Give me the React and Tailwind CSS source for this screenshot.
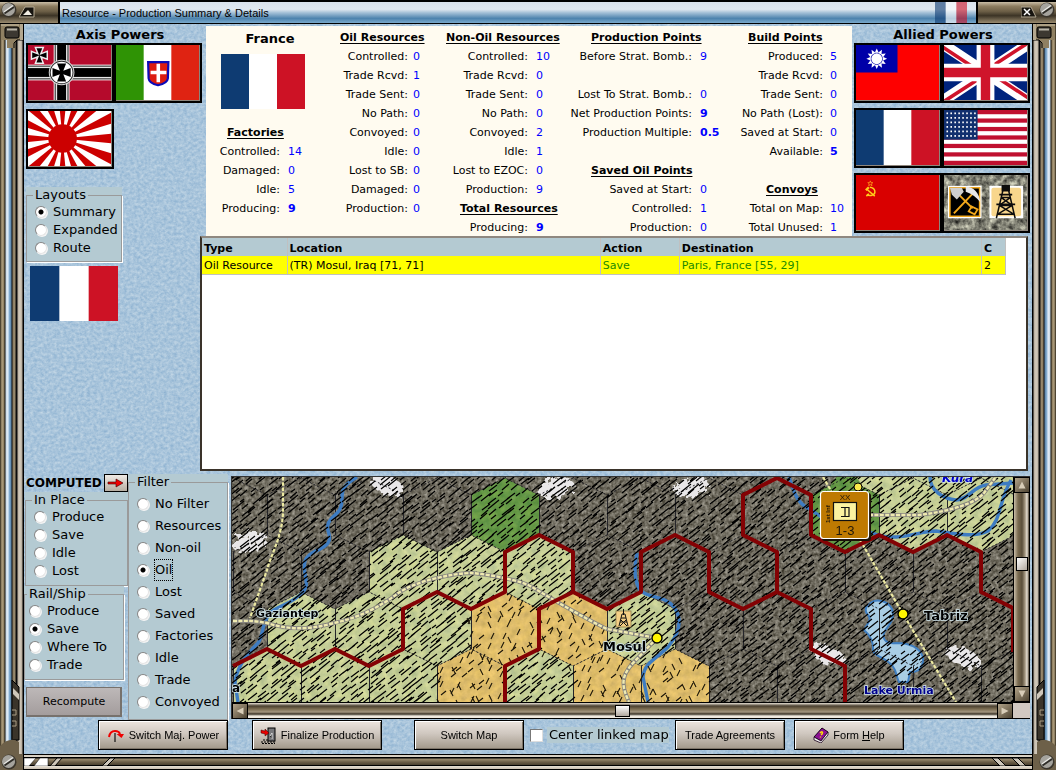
import React from "react";

/* ---------- deterministic random numbers for the terrain strokes ---------- */
function makeRandom(seed) {
  let s = seed;
  return () => {
    s = (s * 1664525 + 1013904223) % 4294967296;
    return s / 4294967296;
  };
}

/* ---------- hex map data ---------- */
const MAP_W = 781;
const MAP_H = 225;
const M = "#706c60";
const C = "#c6cf96";
const F = "#659846";
const D = "#dfbd6a";
const ROWS = [
  { r: -1, kinds: [M, M, M, M, M, M, M, M, M, C, C, C] },
  { r: 0, kinds: [M, M, M, M, F, M, M, M, M, F, C, C] },
  { r: 1, kinds: [M, M, C, C, C, M, M, M, M, M, M, M] },
  { r: 2, kinds: [M, C, C, C, D, D, C, M, M, M, M, M] },
  { r: 3, kinds: [C, C, C, D, C, D, D, M, M, M, M, M] },
];
const HEXES = ROWS.flatMap(({ r, kinds }) =>
  kinds.map((fill, c) => ({
    id: `${r}-${c}`,
    fill,
    cx: (r % 2 === 0 ? 1 : 35) + 68 * c,
    cy: 38 + 57 * r,
  }))
);
const hexPoints = (cx, cy) =>
  `${cx},${cy - 37} ${cx + 34},${cy - 20} ${cx + 34},${cy + 20} ${cx},${cy + 37} ${cx - 34},${cy + 20} ${cx - 34},${cy - 20}`;

function kindAt(x, y) {
  let best = HEXES[0];
  let bestD = Infinity;
  for (const h of HEXES) {
    const d = (h.cx - x) ** 2 + (h.cy - y) ** 2;
    if (d < bestD) {
      bestD = d;
      best = h;
    }
  }
  return best.fill;
}

const STROKES = (() => {
  const rnd = makeRandom(7);
  let slanted = "";
  let crossed = "";
  for (let y = 0; y < MAP_H + 8; y += 6) {
    for (let x = -6; x < MAP_W; x += 10) {
      const px = Math.round(x + rnd() * 7);
      const py = Math.round(y + rnd() * 4);
      const len = 4 + Math.round(rnd() * 7);
      const pick = rnd();
      if (kindAt(px + len / 2, py - len / 2) === D) {
        if (pick < 0.25) crossed += `M${px} ${py}l3 -6`;
        else if (pick < 0.42) crossed += `M${px} ${py}l5 -4`;
        else if (pick < 0.6) crossed += `M${px} ${py}l3 6`;
      } else {
        slanted += `M${px} ${py}l${len} ${-Math.round(len * 0.8)}`;
      }
    }
  }
  return { slanted, crossed };
})();

const BORDERS = [
  "M1 189L35 172L69 189L103 172L137 189L171 172V132L205 115L239 132L273 115V75L307 58L341 75V115L375 132L409 115V75L443 58L477 75V115L511 132L545 115L579 132V172L613 189V230",
  "M545 115V75L511 58V18L545 1L579 18V58L613 75L647 58L681 75L715 58L749 75V115L783 132",
  "M273 230V189L307 172V132L341 115",
  "M781 132V175",
];
const RIVERS = [
  "M125 0C112 8 110 12 110 20C110 36 104 36 99 42C90 52 102 58 96 66C90 74 76 74 73 84C70 96 78 106 72 114C60 128 46 128 38 136C28 150 32 158 26 166C12 180 4 192 3 206L6 225",
  "M405 76C402 90 402 106 409 114C418 122 432 118 442 130C452 144 446 158 436 170C424 182 412 186 411 200L416 225",
  "M557 0C562 14 564 24 574 30C590 38 586 46 640 56C668 66 684 54 704 54C730 58 744 60 756 54C770 42 766 26 779 3",
  "M698 0C698 14 712 22 724 23C738 22 740 10 754 8L781 6",
];
const RAILS = [
  "M1 144C16 144 18 143 35 146C60 154 80 152 102 146C130 140 150 128 165 117C182 104 222 96 240 96C262 98 290 104 300 110C320 122 350 140 375 152L425 161",
  "M425 161L401 186C388 200 390 210 397 225",
  "M637 38H687C720 34 744 26 752 16L763 1",
];
const ROADS = ["M51 0V36C50 60 38 80 35 93L18 141", "M591 0L631 68L671 137L724 225"];
const SNOW = [
  { x: 18, y: 65, turn: -15 },
  { x: 155, y: 8, turn: 22 },
  { x: 323, y: 10, turn: -15 },
  { x: 460, y: 10, turn: -15 },
  { x: 596, y: 178, turn: 22 },
  { x: 731, y: 180, turn: 22 },
];

function MapLabel({ x, y, size = 12, fill = "#000", italic, children }) {
  return (
    <text
      x={x}
      y={y}
      fontSize={size}
      fontWeight="bold"
      fontStyle={italic ? "italic" : "normal"}
      fontFamily="DejaVu Sans, sans-serif"
      fill={fill}
      stroke="#d4e9f0"
      strokeWidth="1.500"
      paintOrder="stroke"
    >
      {children}
    </text>
  );
}

function HexMap() {
  return (
    <svg
      viewBox={`0 0 ${MAP_W} ${MAP_H}`}
      preserveAspectRatio="xMinYMin slice"
      className="block h-[225px] w-full min-w-0 flex-1 bg-[#706c60]"
      role="img"
      aria-label="Map around Mosul"
    >
      <defs>
        <filter id="grain" x="0" y="0" width="100%" height="100%" colorInterpolationFilters="sRGB">
          <feTurbulence type="fractalNoise" baseFrequency="0.3" numOctaves="2" seed="4" />
          <feColorMatrix values="1 0 0 0 0 1 0 0 0 0 1 0 0 0 0 0 0 0 0 1" result="n" />
          <feComposite in="SourceGraphic" in2="n" operator="arithmetic" k1="0" k2="1" k3="0.6" k4="-0.3" />
          <feComposite in2="SourceGraphic" operator="in" />
        </filter>
        <filter id="softgrain" x="0" y="0" width="100%" height="100%" colorInterpolationFilters="sRGB">
          <feTurbulence type="fractalNoise" baseFrequency="0.14" numOctaves="3" seed="9" />
          <feColorMatrix values="1 0 0 0 0 .8 0 0 0 .1 0.4 0 .3 0 .15 0 0 0 0 1" result="n" />
          <feComposite in="SourceGraphic" in2="n" operator="arithmetic" k1="0" k2="1" k3="0.22" k4="-0.11" />
          <feComposite in2="SourceGraphic" operator="in" />
        </filter>
        <filter id="ragged" x="-40%" y="-60%" width="180%" height="220%">
          <feTurbulence type="fractalNoise" baseFrequency="0.2" numOctaves="2" seed="2" />
          <feDisplacementMap in="SourceGraphic" scale="16" />
        </filter>
      </defs>
      <g filter="url(#grain)">
        {HEXES.filter((h) => h.fill === M).map((h) => (
          <polygon key={h.id} points={hexPoints(h.cx, h.cy)} fill={h.fill} />
        ))}
      </g>
      <g filter="url(#softgrain)">
        {HEXES.filter((h) => h.fill !== M).map((h) => (
          <polygon key={h.id} points={hexPoints(h.cx, h.cy)} fill={h.fill} />
        ))}
        <circle cx="614" cy="13" r="16" fill={F} />
      </g>
      <g filter="url(#ragged)">
        {SNOW.map(({ x, y, turn }) => (
          <ellipse key={x} cx={x} cy={y} rx="18" ry="9" fill="#e9e7e8" transform={`rotate(${turn} ${x} ${y})`} />
        ))}
      </g>
      <path d="M636 128C644 120 656 124 660 132C664 144 654 150 652 156C650 164 656 167 664 166C680 166 688 172 691 180C692 190 686 196 678 195L676 205H667C664 200 666 196 660 188C652 180 644 180 641 174C642 164 638 158 632 153C636 146 640 142 636 138C632 134 634 130 636 128Z" fill="#a9cde4" stroke="#3f7ec0" strokeWidth="2" />
      <g fill="none" stroke="#25252a" strokeWidth="1">
        {HEXES.map((h) => (
          <g key={h.id}>
            <path d={`M${h.cx - 34}.500 ${h.cy - 20}v40`} />
            <path d={`M${h.cx - 34} ${h.cy - 20}l34 -17l34 17`} strokeDasharray="2 2" />
          </g>
        ))}
      </g>
      <g fill="none" stroke="#3e7cc2" strokeWidth="3.4">
        {RIVERS.map((d) => <path key={d} d={d} />)}
      </g>
      <path d={STROKES.slanted} stroke="#000" strokeWidth="1.2" fill="none" />
      <path d={STROKES.crossed} stroke="#1a1408" strokeWidth="1.1" fill="none" />
      <g fill="none">
        {RAILS.map((d) => (
          <g key={d}>
            <path d={d} stroke="#85837e" strokeWidth="4" />
            <path d={d} stroke="#efeab0" strokeWidth="2.4" strokeDasharray="4 1.4" />
          </g>
        ))}
        {ROADS.map((d) => (
          <path key={d} d={d} stroke="#ece9a2" strokeWidth="2.2" strokeDasharray="3.6 1.6" />
        ))}
        {BORDERS.map((d) => (
          <path key={d} d={d} stroke="#840204" strokeWidth="4" strokeLinejoin="round" />
        ))}
      </g>
      {/* oil well */}
      <g>
        <rect x="384" y="134" width="15" height="16" fill="#f5cf85" stroke="#8c7a4a" strokeWidth="0.8" />
        <path d="M387 149L390 137H393L396 149M388 145H395M389 141H394M388 149L394 143M395 149L389 143M391.500 132V138" stroke="#111" fill="none" />
      </g>
      <circle cx="425" cy="161" r="5" fill="#fff500" stroke="#000" strokeWidth="1.4" />
      <circle cx="671" cy="137" r="5" fill="#fff500" stroke="#000" strokeWidth="1.4" />
      <circle cx="626" cy="10" r="4" fill="#fbe94a" stroke="#000" />
      {/* unit counter */}
      <g>
        <rect x="590" y="16" width="49" height="48" rx="3" fill="#1a1208" />
        <rect x="588.500" y="14.500" width="48" height="47" rx="3" fill="#be7a02" stroke="#fff" strokeWidth="1.2" />
        <text x="613" y="23" textAnchor="middle" fontSize="8" fontFamily="Liberation Sans, sans-serif" fill="#20180a">XX</text>
        <rect x="601.500" y="25.500" width="23" height="18" fill="#fbf3a0" stroke="#111" strokeWidth="1.2" />
        <path d="M608.500 39V31H617.500V39M608.500 35H617.500M608.500 39V31" fill="none" stroke="#111" strokeWidth="1.2" transform="rotate(90 613 35)" />
        <text x="613" y="58" textAnchor="middle" fontSize="13" fontFamily="Liberation Sans, sans-serif" fill="#20180a">1-3</text>
        <text transform="translate(598 46) rotate(-90)" fontSize="6" fontWeight="bold" fontFamily="Liberation Sans, sans-serif" fill="#20180a">1st Inf</text>
      </g>
      <MapLabel x={24} y={140} size={11}>Gaziantep</MapLabel>
      <MapLabel x={0} y={215} size={12}>a</MapLabel>
      <MapLabel x={371} y={174} size={13}>Mosul</MapLabel>
      <MapLabel x={692} y={143} size={13}>Tabriz</MapLabel>
      <MapLabel x={632} y={217} size={11} fill="#00008c">Lake Urmia</MapLabel>
      <MapLabel x={710} y={5} size={12} fill="#0000c8" italic>Kura</MapLabel>
    </svg>
  );
}

/* ---------- flags ---------- */
function FlagSvg({ children, className = "h-full w-full" }) {
  return (
    <svg viewBox="0 0 84 56" preserveAspectRatio="none" className={`block ${className}`} aria-hidden="true">
      {children}
    </svg>
  );
}
const FRENCH = (
  <>
    <rect width="84" height="56" fill="#fff" />
    <rect width="28" height="56" fill="#0e3b72" />
    <rect x="56" width="28" height="56" fill="#cd1225" />
  </>
);
const PATTEE = "M-4 -8H4L1.500 -1.500L8 -4V4L1.500 1.500L4 8H-4L-1.500 1.500L-8 4V-4L-1.500 -1.500Z";
const FLAGS = {
  Germany: (
    <>
      <rect width="84" height="56" fill="#b50a2c" />
      {[["#fff", 16], ["#111", 14], ["#e8e8e8", 12], ["#000", 9]].map(([f, w]) => (
        <g key={w} fill={f}>
          <rect x={34 - w / 2} width={w} height="56" />
          <rect y={28 - w / 2} width="84" height={w} />
        </g>
      ))}
      <circle cx="34" cy="28" r="13" fill="#ddd" />
      <circle cx="34" cy="28" r="12" fill="#222" />
      <circle cx="34" cy="28" r="11" fill="#fff" />
      <path d={PATTEE} transform="translate(34 28) scale(1.15)" fill="#000" />
      <path d={PATTEE} transform="translate(11.500 10.500)" fill="#000" stroke="#eee" strokeWidth="1.500" />
    </>
  ),
  Italy: (
    <>
      <rect width="84" height="56" fill="#fff" />
      <rect width="28" height="56" fill="#2f9305" />
      <rect x="56" width="28" height="56" fill="#df2312" />
      <path d="M32.500 17.500H53L52.500 34Q52 39 42.500 41Q33.500 39 33 34Z" fill="#dc1c10" stroke="#0b0bb8" strokeWidth="2.200" />
      <path d="M42.800 19V38M35 28H51" stroke="#fff" strokeWidth="3.600" />
    </>
  ),
  Japan: (
    <>
      <rect width="84" height="56" fill="#fff" />
      <g fill="#cc0000">
        {Array.from({ length: 16 }, (_, i) => {
          const a = ((i * 22.5 - 5.6) * Math.PI) / 180;
          const b = ((i * 22.5 + 5.6) * Math.PI) / 180;
          return (
            <path key={i} d={`M35 28L${(35 + 90 * Math.cos(a)).toFixed(1)} ${(28 + 90 * Math.sin(a)).toFixed(1)}L${(35 + 90 * Math.cos(b)).toFixed(1)} ${(28 + 90 * Math.sin(b)).toFixed(1)}Z`} />
          );
        })}
        <circle cx="35" cy="28" r="14.500" />
      </g>
    </>
  ),
  China: (
    <>
      <rect width="84" height="56" fill="#fe0000" />
      <rect width="42" height="28" fill="#0000a8" />
      <g fill="#fff">
        {Array.from({ length: 12 }, (_, i) => (
          <path key={i} d="M-2 -6L0 -10.500L2 -6Z" transform={`translate(21 14) rotate(${i * 30})`} />
        ))}
        <circle cx="21" cy="14" r="5.500" />
      </g>
    </>
  ),
  "United Kingdom": (
    <>
      <rect width="84" height="56" fill="#00247d" />
      <path d="M0 0L84 56M84 0L0 56" stroke="#fff" strokeWidth="11" />
      <path d="M-2 1.500L40 29.500M86 54.500L44 26.500M84 -1.500L42 26M0 57.500L42 30" stroke="#cf142b" strokeWidth="3.600" />
      <path d="M42 0V56M0 28H84" stroke="#fff" strokeWidth="18" />
      <path d="M42 0V56M0 28H84" stroke="#cf142b" strokeWidth="9.500" />
    </>
  ),
  France: FRENCH,
  "United States": (
    <>
      <rect width="84" height="56" fill="#fff" />
      {Array.from({ length: 7 }, (_, i) => (
        <rect key={i} y={(i * 56 * 2) / 13} width="84" height={56 / 13} fill="#c01030" />
      ))}
      <rect width="34" height="30.200" fill="#112f6e" />
      <g fill="#fff">
        {Array.from({ length: 48 }, (_, i) => (
          <rect key={i} x={2.5 + (i % 8) * 4} y={2.5 + Math.floor(i / 8) * 4.6} width="1.600" height="1.800" />
        ))}
      </g>
    </>
  ),
  "Soviet Union": (
    <>
      <rect width="84" height="56" fill="#d90000" />
      <g fill="none" stroke="#ffce1a" strokeWidth="1.500">
        <path d="M14 12.500C20 13 20.500 19 16.500 20.500C14 21.500 12 20.500 11 19.500M10.500 21.500L13 19M11 14.500L19 21.500" />
        <path d="M10 15.500L13 12.500" strokeWidth="2.400" />
      </g>
      <path d="M14.500 6l.7 1.800h1.900l-1.500 1.200.6 1.900-1.700-1.100-1.700 1.100.6-1.900-1.500-1.200h1.900z" fill="none" stroke="#ff9a1a" strokeWidth="0.800" />
    </>
  ),
  "Resource markers": (
    <>
      <rect width="84" height="56" fill="#76746a" filter="url(#rock)" />
      <rect x="4" y="11" width="34" height="33" fill="#fff" />
      <rect x="6" y="13" width="30" height="29" fill="#000" stroke="#f2a81c" strokeWidth="1.500" />
      <path d="M10 39L30 18M15 20L29 34" stroke="#f2a81c" strokeWidth="2" />
      <path d="M6 13H18L20 17L13 25L8 20Z" fill="#cfcfcf" />
      <path d="M22 12Q34 12 37 28Q31 20 22 17Z" fill="#e8e8e8" />
      <path d="M28 32L34 35L31 40L25 37Z" fill="none" stroke="#f2a81c" strokeWidth="1.800" />
      <rect x="46" y="11" width="34" height="33" fill="#fff" />
      <rect x="48" y="13" width="30" height="29" rx="2" fill="#f8d68c" />
      <path d="M53 44L60 14H65L72 44M56 31H69M54 40H71M58 23H67M56 31L67 23M69 31L58 23M54 40L69 31M71 40L56 31M59 11H66V16H59Z" fill="none" stroke="#0c0c0c" strokeWidth="1.500" />
      <path d="M59 11H66V16H59Z" fill="#0c0c0c" />
      <path d="M56 20H69M53 30H72" stroke="#0c0c0c" strokeWidth="1.800" />
    </>
  ),
};

function FlagButton({ name }) {
  return (
    <button type="button" aria-label={name} className="h-[60px] w-[88px] border-2 border-black">
      <span className="block h-full w-full border-r border-b border-[#8d857c]">
        <FlagSvg>{FLAGS[name]}</FlagSvg>
      </span>
    </button>
  );
}

/* ---------- small form parts ---------- */
function Radio({ name, label, checked, row, focused }) {
  return (
    <label className={`flex items-center gap-[6px] ${row}`}>
      <input
        type="radio"
        name={name}
        defaultChecked={checked}
        className="size-3 shrink-0 appearance-none rounded-full border border-t-[#858585] border-l-[#858585] border-r-[#e4e4e4] border-b-[#e4e4e4] bg-white shadow-[1px_1px_0_#f4f4f4] checked:bg-[radial-gradient(circle,#000_2px,#fff_3px)]"
      />
      <span className={focused ? "outline outline-1 outline-dotted outline-black" : ""}>{label}</span>
    </label>
  );
}

function RadioGroup({ title, name, options, selected, row, className, inner, focused }) {
  return (
    <div className={`bg-[#b4cad2] ${className}`}>
      <fieldset className={`border border-[#9a9a9a] shadow-[1px_1px_0_#fff] ${inner}`}>
        <legend className="-ml-[2px] bg-[#b4cad2] px-[2px] leading-4">{title}</legend>
        {options.map((o) => (
          <Radio key={o} name={name} label={o} checked={o === selected} row={row} focused={focused === o} />
        ))}
      </fieldset>
    </div>
  );
}

function PushButton({ children, className }) {
  return (
    <button
      type="button"
      className={`flex h-[30px] items-center justify-center gap-1 border border-black bg-[linear-gradient(180deg,#ece4de,#cfc7bf_45%,#a29889)] font-['Liberation_Sans',sans-serif] text-[11px] leading-4 whitespace-nowrap shadow-[inset_1px_1px_0_#fff,inset_-1px_-1px_0_#7d7468] ${className}`}
    >
      {children}
    </button>
  );
}

/* ---------- production summary ---------- */
const h = (text, pad) => ({ head: text, pad });
const v = (label, value, bold) => ({ label, value, bold });
const COLUMNS = [
  {
    grid: "grid-cols-[74fr_46fr] gap-x-2",
    rows: [h("Factories", "pl-[21px]"), v("Controlled:", "14"), v("Damaged:", "0"), v("Idle:", "5"), v("Producing:", "9", true)],
  },
  {
    grid: "grid-cols-[74fr_27fr] gap-x-[5px]",
    rows: [
      h("Oil Resources", "pl-[6px]"), v("Controlled:", "0"), v("Trade Rcvd:", "1"), v("Trade Sent:", "0"), v("No Path:", "0"),
      v("Convoyed:", "0"), v("Idle:", "0"), v("Lost to SB:", "0"), v("Damaged:", "0"), v("Production:", "0"),
    ],
  },
  {
    grid: "grid-cols-[88fr_30fr] gap-x-2",
    rows: [
      h("Non-Oil Resources", "pl-[6px]"), v("Controlled:", "10"), v("Trade Rcvd:", "0"), v("Trade Sent:", "0"), v("No Path:", "0"),
      v("Convoyed:", "2"), v("Idle:", "1"), v("Lost to EZOC:", "0"), v("Production:", "9"), h("Total Resources", "pl-[20px]"), v("Producing:", "9", true),
    ],
  },
  {
    grid: "grid-cols-[126fr_30fr] gap-x-2",
    rows: [
      h("Production Points", "pl-[25px]"), v("Before Strat. Bomb.:", "9"), null, v("Lost To Strat. Bomb.:", "0"), v("Net Production Points:", "9", true),
      v("Production Multiple:", "0.5", true), null, h("Saved Oil Points", "pl-[25px]"), v("Saved at Start:", "0"), v("Controlled:", "1"), v("Production:", "0"),
    ],
  },
  {
    grid: "grid-cols-[93fr_22fr] gap-x-[7px]",
    rows: [
      h("Build Points", "pl-[18px]"), v("Produced:", "5"), v("Trade Rcvd:", "0"), v("Trade Sent:", "0"), v("No Path (Lost):", "0"),
      v("Saved at Start:", "0"), v("Available:", "5", true), null, h("Convoys", "pl-[36px]"), v("Total on Map:", "10"), v("Total Unused:", "1"),
    ],
  },
];

function StatColumn({ grid, rows }) {
  return (
    <div>
      {rows.map((r, i) =>
        !r ? (
          <div key={i} className="h-[19px]" />
        ) : r.head ? (
          <h3 key={i} className={`h-[19px] font-bold whitespace-nowrap underline underline-offset-2 ${r.pad}`}>{r.head}</h3>
        ) : (
          <p key={i} className={`grid h-[19px] whitespace-nowrap ${grid}`}>
            <span className="flex justify-end">{r.label}</span>
            <span className={`text-[#0000ff] ${r.bold ? "font-bold" : ""}`}>{r.value}</span>
          </p>
        )
      )}
    </div>
  );
}

function Screw({ className }) {
  return (
    <svg viewBox="0 0 16 16" className={`shrink-0 ${className}`} aria-hidden="true">
      <circle cx="8" cy="8" r="7.500" fill="#3a352c" />
      <circle cx="7.500" cy="7.500" r="6.500" fill="#a5a39d" />
      <path d="M3 10L12 3.500" stroke="#e8e8e4" strokeWidth="1.500" />
      <path d="M3.500 11.500L13 5" stroke="#2f2d28" strokeWidth="1.800" />
    </svg>
  );
}

function SideFrame({ flip }) {
  return (
    <div className={`flex w-6 shrink-0 flex-col bg-[linear-gradient(90deg,#2d2618,#b09f7e_2px,#8b7b5d_4px,#12100b_5px,#c9d8e4_6px,#e5eff8_8px,#8fb6d8_9px,#5b86ab_11px,#0a0a0a_12px,#8a7c61_13px,#9a8c70_15px,#0a0a0a_16px,#0a0a0a_17px,#bdb3a4_18px,#d4ccbe_20px,#b5aa9a_22px,#000_23px)] ${flip ? "-scale-x-100" : ""}`}>
      <svg viewBox="0 0 24 24" className="h-6 w-6" aria-hidden="true">
        <path d="M1 0H24V16H17L14 19V24H7V16H1Z" fill="#8f8062" />
        <path d="M1 1H19" stroke="#cabfa6" />
        <path d="M14 24V19L17 16H24" stroke="#000" fill="none" />
        <path d="M20 0H24V16H20Z" fill="#b3a78f" />
        <rect x="5" y="3" width="14" height="11" rx="2" fill="#3c3831" stroke="#000" />
        <path d="M7 5.500H17" stroke="#b8b4a8" strokeWidth="2" />
        <path d="M23.500 0V24" stroke="#000" />
      </svg>
      <div className="flex-1" />
      <svg viewBox="0 0 24 80" className="h-20 w-6" aria-hidden="true">
        <path d="M12 6L19 13V66H12Z" fill="#3a342a" stroke="#000" />
        <path d="M13 14L19 20V26L13 20Z" fill="#cfc7ba" />
        <path d="M12 36H16V41H12M12 47H16V52H12" stroke="#a99c84" fill="none" />
        <path d="M0 72Q10 62 19 68V80H0Z" fill="#6d6049" />
      </svg>
    </div>
  );
}

function Arrow({ dir }) {
  const d = { up: "M8 4L12 12H4Z", down: "M8 12L12 4H4Z", left: "M4 8L12 4V12Z", right: "M12 8L4 4V12Z" }[dir];
  return (
    <button type="button" aria-label={`Scroll ${dir}`} className="block size-4 shrink-0 border border-black bg-[linear-gradient(135deg,#b3a48a,#4c4231)]">
      <svg viewBox="0 0 16 16" className="block h-full w-full"><path d={d} fill="#d8cdb8" /></svg>
    </button>
  );
}

const cell = "border-r border-[#c0c0c0] px-[2px] pt-[2px] text-left leading-[15px]";

export default function App() {
  return (
    <div className="flex min-h-screen w-full flex-col bg-[#a9c6dd] font-['DejaVu_Sans',sans-serif] text-[11px] text-black">
      <svg className="absolute size-0" aria-hidden="true">
        <filter id="rock" x="0" y="0" width="100%" height="100%" colorInterpolationFilters="sRGB">
          <feTurbulence type="fractalNoise" baseFrequency="0.18" numOctaves="3" seed="3" />
          <feColorMatrix values="1 0 0 0 0 1 0 0 0 0 .9 0 0 0 0 0 0 0 0 1" />
        </filter>
        <filter id="water" x="0" y="0" width="100%" height="100%" colorInterpolationFilters="sRGB">
          <feTurbulence type="fractalNoise" baseFrequency="0.3 0.34" numOctaves="3" seed="5" />
          <feColorMatrix values=".26 0 0 0 .53 .18 0 0 0 .68 .1 0 0 0 .81 0 0 0 0 1" />
        </filter>
      </svg>

      {/* title bar */}
      <header className="flex h-6 shrink-0 items-stretch border-t-2 border-b border-black bg-[linear-gradient(180deg,#d9e2ec,#e0e8f0_35%,#a8c3d9_50%,#4d83ae_78%,#79a9cc)]">
        <div className="flex w-[60px] items-start gap-[2px] border-r-2 border-black bg-[linear-gradient(180deg,#c9bda6,#8d7d60_20%,#6b5e46_45%,#3c3426_65%,#9a8b6f)] pl-px">
          <Screw className="size-4" />
          <button type="button" aria-label="Roll up" className="mt-1 block h-3 w-4">
            <svg viewBox="0 0 16 12" className="block h-full w-full">
              <path d="M0 11L6 1H15V11Z" fill="#17140f" stroke="#b5aa94" strokeWidth="1" />
              <path d="M4 9L9 4L13 9Z" fill="#f0ece2" />
            </svg>
          </button>
        </div>
        <h1 className="flex-1 self-center pl-[2px] font-['Liberation_Sans',sans-serif] text-[11px] leading-4">Resource - Production Summary &amp; Details</h1>
        <FlagSvg className="mr-[9px] h-full w-8 opacity-60">{FRENCH}</FlagSvg>
        <div className="flex w-[80px] items-start justify-end gap-[2px] border-l-2 border-black bg-[linear-gradient(180deg,#c9bda6,#8d7d60_20%,#6b5e46_45%,#3c3426_65%,#9a8b6f)] pr-px">
          <button type="button" aria-label="Close" className="mt-1 block h-3 w-4">
            <svg viewBox="0 0 16 12" className="block h-full w-full">
              <path d="M0 1H10L15 11H0Z" fill="#17140f" stroke="#b5aa94" />
              <path d="M3 3L9 9M9 3L3 9" stroke="#fff" strokeWidth="1.500" />
            </svg>
          </button>
          <Screw className="size-4" />
        </div>
      </header>

      <div className="flex flex-1">
        <SideFrame />
        <main className="relative isolate flex min-w-0 flex-1 flex-col">
          <svg className="absolute inset-0 -z-10 h-full w-full" aria-hidden="true">
            <rect width="100%" height="100%" filter="url(#water)" />
          </svg>

          <section className="flex h-[447px]">
            {/* axis powers and layouts */}
            <div className="w-[176px] shrink-0 pl-[2px]">
              <h2 className="h-[19px] w-[188px] pt-[3px] text-center text-[13px] leading-4 font-bold">Axis Powers</h2>
              <div className="grid w-[176px] grid-cols-2 gap-y-[6px]">
                <FlagButton name="Germany" />
                <FlagButton name="Italy" />
                <FlagButton name="Japan" />
              </div>
              <RadioGroup
                title="Layouts" name="layout" options={["Summary", "Expanded", "Route"]} selected="Summary"
                row="h-[18px]" className="mt-[18px] w-[96px] text-[13px]" inner="pb-[4px] pl-[8px]"
              />
              <FlagSvg className="mt-1 ml-1 h-[55px] w-[88px]">{FRENCH}</FlagSvg>
            </div>

            <div className="mr-1 flex min-w-0 flex-1 flex-col">
              <div className="-mr-1 flex h-[212px] shrink-0">
                {/* summary */}
                <div className="mt-[2px] ml-[6px] grid min-w-0 flex-1 grid-cols-[128fr_106fr_126fr_164fr_122fr] bg-[#fffbf0] pt-[2px] leading-[19px]">
                  <div>
                    <h2 className="h-[26px] pt-px text-center text-[13px] leading-5 font-bold">France</h2>
                    <FlagSvg className="ml-[15px] h-[55px] w-[84px]">{FRENCH}</FlagSvg>
                    <div className="pt-[14px]">
                      <StatColumn {...COLUMNS[0]} />
                    </div>
                  </div>
                  {COLUMNS.slice(1).map((c) => (
                    <StatColumn key={c.rows[0].head} {...c} />
                  ))}
                </div>
                {/* allied powers */}
                <div className="w-[180px] shrink-0 pl-[2px]">
                  <h2 className="h-[19px] w-[178px] pt-[3px] text-center text-[13px] leading-4 font-bold">Allied Powers</h2>
                  <div className="grid w-[176px] grid-cols-2 gap-y-[5px]">
                    {["China", "United Kingdom", "France", "United States", "Soviet Union", "Resource markers"].map((n) => (
                      <FlagButton key={n} name={n} />
                    ))}
                  </div>
                </div>
              </div>
              {/* resource table */}
              <div className="flex-1 border-2 border-[#3a332a] border-t-[#8f8880] bg-white pr-5">
                <table className="w-full table-fixed border-collapse">
                  <colgroup>
                    <col className="w-[85px]" />
                    <col className="w-[39%]" />
                    <col className="w-[79px]" />
                    <col className="w-auto" />
                    <col className="w-6" />
                  </colgroup>
                  <thead>
                    <tr className="h-[18px] bg-[#b4cad2]">
                      {["Type", "Location", "Action", "Destination", "C"].map((t) => (
                        <th key={t} scope="col" className={cell}>{t}</th>
                      ))}
                    </tr>
                  </thead>
                  <tbody>
                    <tr className="h-[18px] border-b border-[#c0c0c0] bg-[#ffff00]">
                      <td className={cell}>Oil Resource</td>
                      <td className={cell}>(TR) Mosul, Iraq [71, 71]</td>
                      <td className={`${cell} text-[#1c8a00]`}>Save</td>
                      <td className={`${cell} text-[#1c8a00]`}>Paris, France [55, 29]</td>
                      <td className={cell}>2</td>
                    </tr>
                  </tbody>
                </table>
              </div>
            </div>
          </section>

          <section className="mt-[3px] flex">
            <div className="w-[104px] shrink-0 text-[13px]">
              <div className="flex h-[18px] items-start justify-between pl-[2px]">
                <h2 className="text-[12px] leading-[19px] font-bold">COMPUTED</h2>
                <button type="button" aria-label="Compute" className="block h-[18px] w-6 border border-black bg-[linear-gradient(180deg,#f0eae5,#b8aea2)]">
                  <svg viewBox="0 0 22 16" className="block h-full w-full">
                    <path d="M3 7H11V4L18 8L11 12V9H3Z" fill="#f00000" stroke="#300" strokeWidth="0.600" />
                  </svg>
                </button>
              </div>
              <RadioGroup
                title="In Place" name="inplace" options={["Produce", "Save", "Idle", "Lost"]}
                row="h-[18px]" className="ml-px" inner="pb-[5px] pl-[8px]"
              />
              <RadioGroup
                title="Rail/Ship" name="rail" options={["Produce", "Save", "Where To", "Trade"]} selected="Save"
                row="h-[18px]" className="w-[100px]" inner="pb-[5px] pl-[4px]"
              />
              <button type="button" className="mt-[7px] ml-[2px] block h-[30px] w-[96px] border border-[#77716c] bg-[linear-gradient(180deg,#bdb8b8,#a39c9c)] text-[11px] shadow-[inset_-1px_-1px_0_#77716c]">
                Recompute
              </button>
            </div>
            <RadioGroup
              title="Filter" name="filter"
              options={["No Filter", "Resources", "Non-oil", "Oil", "Lost", "Saved", "Factories", "Idle", "Trade", "Convoyed"]}
              selected="Oil" focused="Oil"
              row="h-[22px]" className="w-[100px] shrink-0 self-start text-[13px]" inner="pt-[3px] pb-[6px] pl-[8px]"
            />
            {/* linked map */}
            <div className="mt-[2px] mr-[2px] ml-[3px] flex min-w-0 flex-1 flex-col self-start border-t border-l border-[#333]">
              <div className="flex">
                <HexMap />
                <div className="flex w-[17px] shrink-0 flex-col items-center border-x border-black bg-[linear-gradient(90deg,#c9bda8,#7a6b50_4px,#5a4e3a_8px,#a39680_11px,#e7e0d4_13px,#4a4030)]">
                  <Arrow dir="up" />
                  <div className="h-16" />
                  <div className="h-[14px] w-3 border border-black bg-[linear-gradient(135deg,#fff,#b0a79d)]" />
                  <div className="flex-1" />
                  <Arrow dir="down" />
                </div>
              </div>
              <div className="flex h-[17px] border-y border-black">
                <div className="flex min-w-0 flex-1 items-center bg-[linear-gradient(180deg,#e7e0d4,#4a4030_3px,#7a6b50_6px,#a39680_9px,#3a3226_11px,#efe9df_13px)]">
                  <Arrow dir="left" />
                  <div className="flex-1" />
                  <div className="h-3 w-[15px] border border-black bg-[linear-gradient(180deg,#fff,#b0a79d)]" />
                  <div className="flex-1" />
                  <Arrow dir="right" />
                </div>
                <div className="w-[17px] bg-[#d1c8c2]" />
              </div>
            </div>
          </section>

          {/* command buttons */}
          <footer className="flex h-8 items-start pl-[74px]">
            <PushButton className="w-[130px]">
              <svg viewBox="0 0 18 14" className="h-[14px] w-[18px]" aria-hidden="true">
                <path d="M2 9Q3 3 8 3Q12 3 13 6" fill="none" stroke="#f00000" strokeWidth="2" />
                <path d="M9.500 6H17L14.500 10Z" fill="#f00000" />
                <path d="M8 5V14" stroke="#111" strokeWidth="1.200" />
              </svg>
              Switch Maj. Power
            </PushButton>
            <PushButton className="ml-6 w-[130px]">
              <svg viewBox="0 0 17 17" className="size-[17px]" aria-hidden="true">
                <rect x="8" y="1" width="7" height="13" fill="#77777a" stroke="#000" />
                <path d="M1 15H16M3 13H8M2 16.500H15" stroke="#000" strokeDasharray="2 1" />
                <path d="M1 3L5 4V2L9 6L5 9V7L1 6Z" fill="#e80000" stroke="#300" strokeWidth="0.500" />
                <path d="M10 9L12 6V12" stroke="#ddd" />
              </svg>
              Finalize Production
            </PushButton>
            <PushButton className="ml-8 w-[110px]">Switch Map</PushButton>
            <label className="ml-1 flex h-[30px] items-center gap-1 text-[13px] whitespace-nowrap">
              <input type="checkbox" className="ml-[2px] size-[13px] appearance-none border border-t-[#777] border-l-[#777] border-r-[#ddd] border-b-[#ddd] bg-white checked:bg-[#333]" />
              <span className="w-[122px] bg-[#b4cad2] pl-[2px] leading-4">Center linked map</span>
            </label>
            <PushButton className="ml-[6px] w-[110px]">Trade Agreements</PushButton>
            <PushButton className="ml-[9px] w-[110px]">
              <svg viewBox="0 0 16 16" className="size-4" aria-hidden="true">
                <path d="M1 10L9 1L15 5L8 14Z" fill="#8a1292" stroke="#1a001c" />
                <path d="M1 10L8 14L15 5V8L8 16L1 13Z" fill="#efefef" stroke="#1a001c" strokeWidth="0.800" />
                <path d="M7 6Q8.500 4 9.500 5.500Q9.500 7 8 8M7.500 9.500V10.500" stroke="#ffe600" strokeWidth="1.500" fill="none" />
              </svg>
              <span>Form <u>H</u>elp</span>
            </PushButton>
          </footer>
        </main>
        <SideFrame flip />
      </div>

      {/* bottom frame */}
      <div className="flex h-4 shrink-0 bg-[#6d6049]">
        <div className="flex w-6 items-end border-r border-black pl-px">
          <Screw className="size-4" />
        </div>
        <div className="flex flex-1 items-center justify-between bg-[linear-gradient(180deg,#000_1px,#d8d0c2_1px,#d8d0c2_3px,#000_3px,#000_4px,#9c8d70_5px,#6c5f48_8px,#4a4030_11px,#000_11px,#000_12px,#e8e2d6_12px,#c9bfb0_15px,#000_15px)]">
          <svg viewBox="0 0 100 8" className="h-2 w-[100px]" aria-hidden="true">
            <path d="M0 0H12L5 8H0ZM16 0H24V8H10Z" fill="#fff" stroke="#000" strokeWidth="0.500" />
            <path d="M33 0H38L31 8H26ZM86 0H91L83 8H78Z" fill="#cfc7ba" stroke="#000" />
          </svg>
          <svg viewBox="0 0 40 8" className="h-2 w-10" aria-hidden="true">
            <path d="M0 0H6L14 8H8ZM20 0H26L34 8H28Z" fill="#cfc7ba" stroke="#000" />
          </svg>
        </div>
        <div className="flex w-6 items-end justify-end border-l border-black pr-px">
          <Screw className="size-4" />
        </div>
      </div>
    </div>
  );
}
